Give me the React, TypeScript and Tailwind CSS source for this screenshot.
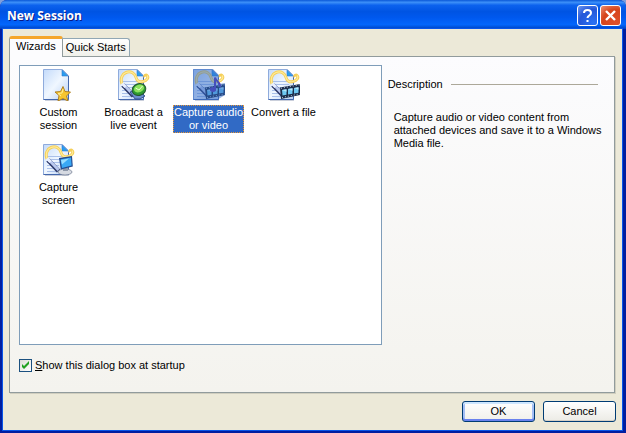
import React, { useState } from 'react'

const Sheet = () => (
  <>
    <path d="M2 2h18l6 6v24H2z" fill="#8a94b0" opacity=".45" />
    <path d="M.5.5h19l6 6v24H.5z" fill="url(#sheet)" stroke="#8fabdc" />
    <path d="M.5 30.500h25V7" fill="none" stroke="#4468ae" />
    <path d="M19 1l6 6h-6z" fill="#2a9df0" stroke="#2f78cc" strokeWidth=".6" />
  </>
)

const Lines = () => (
  <path d="M4 12h17M4 15h17M4 18h17M4 21h12M4 24h9M4 27h9" stroke="#a9c0ea" transform="translate(0 .5)" />
)

const Wand = () => (
  <>
    <path
      d="M4 15C2 10 4 5 8 3.500c5-2 9 1 10 5 1 4 4 5 7 4 4-1 6-4 4-6-1-1-3 0-2 1.500"
      fill="none"
      stroke="#f5cf58"
      strokeWidth="3"
    />
    <path
      d="M4 15C2 10 4 5 8 3.500c5-2 9 1 10 5 1 4 4 5 7 4 4-1 6-4 4-6"
      fill="none"
      stroke="#ffeb98"
      strokeWidth="1.200"
    />
    <path d="M5 16l10.500 11" stroke="#2b3768" strokeWidth="4.600" />
    <path d="M5.500 15.500l10 10.500" stroke="#b9c8ee" strokeWidth="2.800" />
    <path d="M4 14.500l3.500 3.500" stroke="#e8efff" strokeWidth="3" />
  </>
)

const Film = () => (
  <>
    <path d="M12 18.500l20-3.500v11l-19 4z" fill="#1b2b49" />
    <path d="M14 21l4.500-.8v5.500l-4 .8zM20 20l4.500-.8v5.500l-4.500.9zM26 19l4.500-.8v5.500l-4.500.9z" fill="#6fc8f2" />
    <path d="M14 21l4.500-.8v2.500zM20 20l4.500-.8v2.500zM26 19l4.500-.8v2.500z" fill="#b9e8fb" />
    <path d="M13 19.300l19-3.500M14 28.500l18-3.700" stroke="#c4d8ea" strokeWidth=".9" strokeDasharray="1 2" />
  </>
)

const icons = {
  custom: (
    <>
      <Sheet />
      <path
        d="M20 17.500l2 5 5.500.5-4 4 1.500 5-5-2.500-5 2.500 1-5.500-4-3.500 5.500-.5z"
        fill="#f7c52f"
        stroke="#a9791d"
        strokeWidth=".9"
      />
      <path d="M20 20l-1 4-4 .5 3 2.500" fill="none" stroke="#fff09a" />
    </>
  ),
  broadcast: (
    <>
      <Sheet />
      <Lines />
      <Wand />
      <path d="M12 23l5 7h5l5-3-8-6z" fill="#6c8fcf" stroke="#233e78" strokeWidth=".8" />
      <ellipse cx="21" cy="20.500" rx="7" ry="5.800" fill="#2e9b31" stroke="#23542e" transform="rotate(-20 21 20.500)" />
      <ellipse cx="21" cy="19.500" rx="5.200" ry="3.800" fill="#8be35d" transform="rotate(-20 21 19.500)" />
      <path d="M21 21l3.500-4M21 21l-3.500-2" stroke="#eaffd0" />
    </>
  ),
  capture: (
    <>
      <Sheet />
      <Lines />
      <Wand />
      <Film />
      <ellipse cx="20" cy="20.500" rx="3.200" ry="2.400" fill="#5a35b0" />
      <path d="M22 20.500V8.500c1 4.500 6 4.500 5 9.500" fill="none" stroke="#5a35b0" strokeWidth="2" />
    </>
  ),
  convert: (
    <>
      <Sheet />
      <Lines />
      <Wand />
      <Film />
    </>
  ),
  screen: (
    <>
      <Sheet />
      <Lines />
      <Wand />
      <ellipse cx="22" cy="28" rx="7" ry="3" fill="#d6dae2" stroke="#727d90" strokeWidth=".7" />
      <path d="M20 24l5-1v4h-5z" fill="#8e98aa" />
      <path d="M16 14l13-2 .8 10.500-12 3z" fill="#254b8e" />
      <path d="M17.500 15.300l10.500-1.700.6 8-9.600 2.400z" fill="#39a8f5" />
      <path d="M18 16l8-1.500-7 6z" fill="#9addff" />
    </>
  ),
}

type IconName = keyof typeof icons

const wizards: { icon: IconName; lines: string[] }[] = [
  { icon: 'custom', lines: ['Custom', 'session'] },
  { icon: 'broadcast', lines: ['Broadcast a', 'live event'] },
  { icon: 'capture', lines: ['Capture audio', 'or video'] },
  { icon: 'convert', lines: ['Convert a file'] },
  { icon: 'screen', lines: ['Capture', 'screen'] },
]

const TitleBar = () => (
  <header className="flex h-[29px] shrink-0 items-center justify-between rounded-t-[7px] bg-[linear-gradient(180deg,#0a58d8_0%,#3c8ff8_8%,#0c62ee_18%,#0054e3_40%,#0058ee_60%,#0366fc_85%,#0050d8_94%,#003dbb_100%)] pt-[2px] pr-[5px] pl-[7px]">
    <h1 className="pt-px font-['Open_Sans',sans-serif] text-[12px] leading-4 font-bold text-white [text-shadow:1px_1px_0_#0a1883]">
      New Session
    </h1>
    <div className="flex gap-[2px]">
      <button
        aria-label="Help"
        className="flex size-[21px] items-center justify-center rounded-[3px] border border-white bg-[radial-gradient(circle_at_80%_90%,#2a72f4,#2457d8_60%,#6f98f0)]"
      >
        <svg viewBox="0 0 19 19" className="size-[19px]" fill="none" stroke="#fff" strokeWidth="2">
          <path d="M6 7c0-4 7-4 7 0 0 2.500-3.500 2.500-3.500 5M9.500 14v2" />
        </svg>
      </button>
      <button
        aria-label="Close"
        className="flex size-[21px] items-center justify-center rounded-[3px] border border-white bg-[radial-gradient(circle_at_80%_90%,#e0502a,#d6451c_60%,#ec9175)]"
      >
        <svg viewBox="0 0 19 19" className="size-[19px]" stroke="#fff" strokeWidth="2.400">
          <path d="M5 5l9 9M14 5l-9 9" />
        </svg>
      </button>
    </div>
  </header>
)

const App = () => {
  const [selected, setSelected] = useState(2)

  return (
    <div className="bg-[#7f9fdc] font-['Liberation_Sans',Arial,sans-serif] text-[11px] leading-[13px] text-black">
      <svg className="absolute size-0" aria-hidden="true">
        <defs>
          <linearGradient id="sheet" x1="0" y1="0" x2="1" y2="1">
            <stop offset="0" stopColor="#c3dafa" />
            <stop offset=".5" stopColor="#f0f7ff" />
            <stop offset="1" stopColor="#b4cef5" />
          </linearGradient>
        </defs>
      </svg>
      <div className="flex min-h-screen flex-col rounded-t-[7px] bg-[#001ea0]">
        <TitleBar />
        <main className="mr-1 mb-[3px] ml-[3px] flex flex-1 flex-col bg-[#ece9d8] pt-[7px] pr-[6px] pb-[8px] pl-[6px] shadow-[0_0_0_1px_#0855e8]">
          <div role="tablist" className="flex items-end">
            <button
              role="tab"
              aria-selected="true"
              className="relative -mb-px h-[21px] rounded-t-[3px] border border-t-[3px] border-b-0 border-[#919b9c] border-t-[#f5a62a] bg-[#fcfcfe] px-[6px] pb-[3px]"
            >
              Wizards
            </button>
            <button
              role="tab"
              aria-selected="false"
              className="h-[18px] rounded-tr-[3px] border border-b-0 border-l-0 border-[#91a7b4] bg-linear-to-b from-white to-[#f0f0ea] px-[3px]"
            >
              Quick Starts
            </button>
          </div>

          <section className="mr-px flex flex-1 flex-col border border-[#919b9c] bg-linear-to-b from-[#fcfcfe] to-[#f4f3ee] px-[9px] pt-[8px] pb-[20px] shadow-[1px_1px_0_#d0cebf]">
            <div className="flex flex-1">
              <ul className="grid flex-[359] auto-rows-[75px] grid-cols-[repeat(auto-fill,75px)] content-start border border-[#7f9db9] bg-white pt-[3px] pl-px">
                {wizards.map(({ icon, lines }, i) => (
                  <li key={icon}>
                    <button
                      onClick={() => setSelected(i)}
                      className="flex w-full flex-col items-center gap-1"
                    >
                      <svg viewBox="0 0 32 32" className="size-8" fill="none">
                        {icons[icon]}
                        {selected === i && (
                          <path d="M0 0h20l6 6v9l6-1v12l-8 5H0z" fill="#316ac5" opacity=".5" />
                        )}
                      </svg>
                      <span
                        className={
                          selected === i
                            ? 'border border-dotted border-[#e5983a] bg-[#316ac5] whitespace-nowrap text-white'
                            : 'border border-transparent whitespace-nowrap'
                        }
                      >
                        {lines.map((line) => (
                          <span key={line} className="block">
                            {line}
                          </span>
                        ))}
                      </span>
                    </button>
                  </li>
                ))}
              </ul>
              <aside className="flex-[217] pt-[13px] pl-[6px]">
                <div className="flex items-center gap-[8px] pr-[7px]">
                  <h2>Description</h2>
                  <hr className="flex-1 border-[#aca899]" />
                </div>
                <p className="pt-[20px] pl-[6px]">
                  Capture audio or video content from attached devices and save it to a Windows
                  Media file.
                </p>
              </aside>
            </div>

            <label className="flex items-center gap-[3px] self-start pt-[14px]">
              <span className="relative flex">
                <input
                  type="checkbox"
                  defaultChecked
                  className="peer size-[13px] appearance-none border border-[#1c5180] bg-linear-to-br from-[#dcdcd7] to-white"
                />
                <svg
                  viewBox="0 0 13 13"
                  className="pointer-events-none absolute inset-0 hidden size-[13px] peer-checked:block"
                >
                  <path d="M3 5l2 2 5-5v3l-5 5-2-2z" fill="#21a121" />
                </svg>
              </span>
              <span>
                <u>S</u>how this dialog box at startup
              </span>
            </label>
          </section>

          <footer className="flex justify-end gap-2 pt-[8px]">
            <button className="h-[21px] w-[73px] rounded-[3px] border border-[#003c74] bg-linear-to-b from-white to-[#f0f0ea] shadow-[inset_0_2px_0_#cee7ff,inset_0_-2px_0_#6982ee,inset_2px_0_0_#a3bef5,inset_-2px_0_0_#a3bef5]">
              OK
            </button>
            <button className="h-[21px] w-[73px] rounded-[3px] border border-[#003c74] bg-linear-to-b from-white to-[#ecebe5] shadow-[inset_0_-1px_0_#d6d0c5]">
              Cancel
            </button>
          </footer>
        </main>
      </div>
    </div>
  )
}

export default App
